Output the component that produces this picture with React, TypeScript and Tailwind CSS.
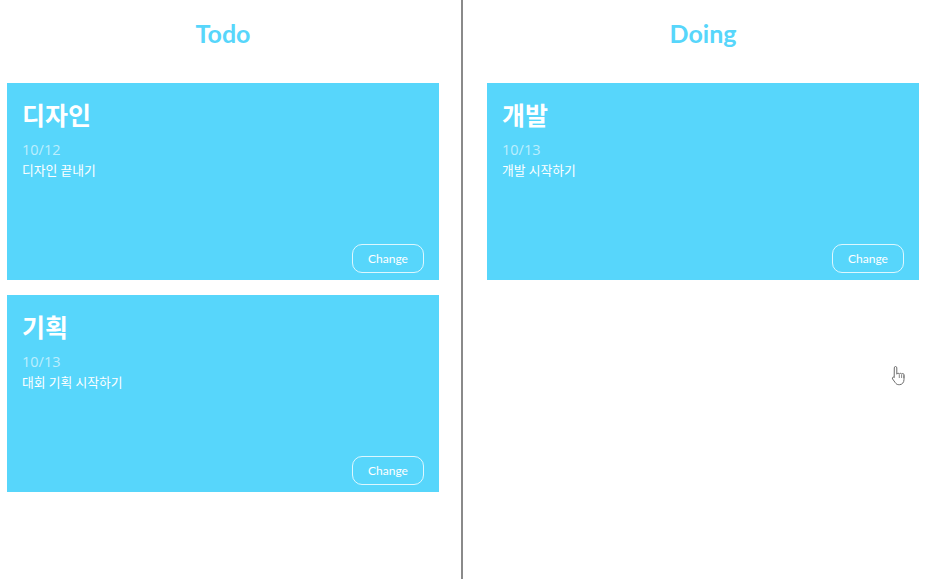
import React from 'react';

type Card = { id: number; title: string; date: string; text: string };

const columns: { name: string; cards: Card[] }[] = [
  {
    name: 'Todo',
    cards: [
      { id: 1, title: '디자인', date: '10/12', text: '디자인 끝내기' },
      { id: 2, title: '기획', date: '10/13', text: '대회 기획 시작하기' },
    ],
  },
  {
    name: 'Doing',
    cards: [{ id: 3, title: '개발', date: '10/13', text: '개발 시작하기' }],
  },
];

const font = { fontFamily: '"Open Sans", "Noto Sans CJK KR", sans-serif' };

const TaskCard = ({ card }: { card: Card }) => (
  <div className="flex h-[197px] flex-col bg-[#57d6fb] px-[15px] pt-[14px] pb-[7px] text-white">
    <h2 className="text-[25px] font-bold leading-[36px]">{card.title}</h2>
    <p className="mt-[6px] text-[14.5px] leading-[21px] text-white/60">{card.date}</p>
    <p className="mt-[1px] text-[12.75px] leading-[18px]">{card.text}</p>
    <div className="mt-auto flex justify-end">
      <button
        className="h-[29px] w-[72px] rounded-[10px] border border-white/80 text-[12px] text-white"
        style={{ fontFamily: 'Lato, "Noto Sans", sans-serif' }}
      >
        Change
      </button>
    </div>
  </div>
);

const Column = ({ name, cards }: { name: string; cards: Card[] }) => (
  <div>
    <h1
      className="pt-[15px] pb-[32px] text-center text-[25px] font-bold leading-[36px] text-[#57d6fb]"
      style={{ fontFamily: 'Lato, "Noto Sans", sans-serif' }}
    >
      {name}
    </h1>
    <div className="flex flex-col gap-[15px]">
      {cards.map((c) => (
        <TaskCard key={c.id} card={c} />
      ))}
    </div>
  </div>
);

const App = () => {
  return (
    <div className="relative flex min-h-[579px] bg-white" style={font}>
      <div className="w-[461px] pl-[7px] pr-[22px]">
        <Column name={columns[0].name} cards={columns[0].cards} />
      </div>
      <div className="w-[2px] bg-[#8a8a8a]" />
      <div className="flex-1 pl-[24px] pr-[6px]">
        <Column name={columns[1].name} cards={columns[1].cards} />
      </div>
      {/* mouse pointer */}
      <svg className="absolute left-[891px] top-[365px]" width="16" height="22" viewBox="0 0 16 22">
        <path
          d="M4.5 1.5c.8 0 1.3.6 1.3 1.4v6.3c.2-.7.7-1 1.3-1s1.1.4 1.2 1c.2-.6.7-.9 1.2-.9.6 0 1.1.4 1.2 1 .2-.5.6-.8 1.1-.8.7 0 1.2.6 1.2 1.3v4.7c0 3-1.9 5.2-4.6 5.2H7.8c-1.6 0-2.6-.7-3.5-2L1.6 14c-.4-.6-.3-1.3.2-1.7.5-.4 1.2-.3 1.6.2l-.2-.2.1-9.4c0-.8.4-1.4 1.2-1.4z"
          fill="#fff"
          stroke="#6b6b6b"
          strokeWidth="1"
          strokeLinejoin="round"
        />
        <path d="M8.3 9.5v3.5M10.6 9.8v3.2M12.9 10.3v2.7" stroke="#6b6b6b" strokeWidth="0.8" />
      </svg>
    </div>
  );
};

export default App;
